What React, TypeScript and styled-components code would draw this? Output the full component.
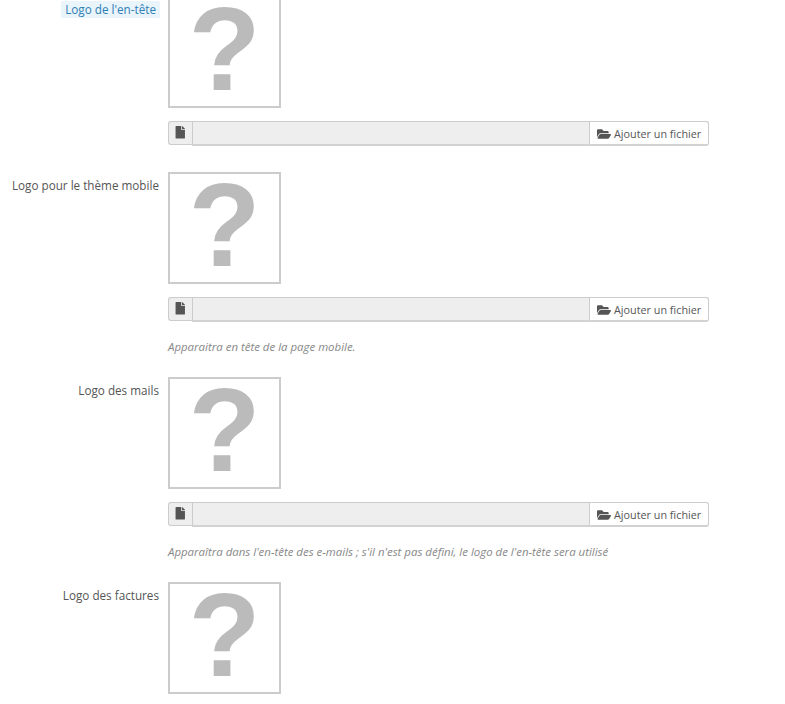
import React from "react";
import styled, { createGlobalStyle } from "styled-components";
import { FaFile, FaFolderOpen } from "react-icons/fa";

const GlobalStyle = createGlobalStyle`
  html, body {
    margin: 0;
    padding: 0;
    height: 100%;
    overflow: hidden;
    background: #fff;
  }
`;

const Page = styled.div`
  display: flex;
  flex-direction: column;
  margin-top: -4px;
  font-family: "Open Sans", sans-serif;
  font-size: 11.7px;
  color: #555;
`;

const Row = styled.div`
  display: grid;
  grid-template-columns: 160px 541px;
  column-gap: 8px;
  margin-bottom: 27px;
`;

const Label = styled.div`
  display: flex;
  justify-content: flex-end;
  align-items: flex-start;
  padding-top: 4.5px;
  line-height: 17px;
`;

const LabelText = styled.span<{ $active?: boolean }>`
  color: ${(p) => (p.$active ? "#2f80b5" : "#555")};
  background: ${(p) => (p.$active ? "#e9f4fb" : "transparent")};
  padding: ${(p) => (p.$active ? "0 4px" : "0")};
  margin-right: ${(p) => (p.$active ? "0" : "1px")};
  border-radius: 2px;
`;

const Field = styled.div`
  display: flex;
  flex-direction: column;
`;

const Thumb = styled.div`
  box-sizing: border-box;
  width: 113px;
  height: 112px;
  padding-bottom: 6px;
  border: 2px solid #ccc;
  background: #fff;
  display: flex;
  align-items: center;
  justify-content: center;
  font-family: "Liberation Sans", sans-serif;
  font-weight: 700;
  font-size: 118px;
  line-height: 100px;
  color: #bbb;
`;

const FileBar = styled.div`
  display: flex;
  align-items: flex-start;
  height: 24px;
  margin-top: 13px;
`;

const Addon = styled.div`
  box-sizing: border-box;
  width: 24px;
  height: 24px;
  display: flex;
  align-items: center;
  justify-content: center;
  background: #eee;
  border: 1px solid #ccc;
  border-right: none;
  border-radius: 3px 0 0 3px;
  color: #555;
  font-size: 12.5px;
  padding-bottom: 1px;
`;

const FileInput = styled.div`
  box-sizing: border-box;
  flex: 1;
  height: 25px;
  background: #eee;
  border: 1px solid #ccc;
  border-bottom: 2px solid #d2d2d2;
  border-right: none;
`;

const AddButton = styled.button`
  box-sizing: border-box;
  width: 120px;
  height: 25px;
  padding: 1px 0 0 7px;
  display: flex;
  align-items: center;
  gap: 3px;
  background: #fff;
  border: 1px solid #ccc;
  border-bottom: 2px solid #d2d2d2;
  border-radius: 0 3px 3px 0;
  font-family: "Open Sans", sans-serif;
  font-size: 10.8px;
  color: #555;
  white-space: nowrap;
`;

const Help = styled.p`
  margin: 18px 0 -5px;
  font-size: 11.45px;
  line-height: 16px;
  font-style: italic;
  color: #888;
`;

const logos = [
  { label: "Logo de l'en-tête", active: true },
  { label: "Logo pour le thème mobile", help: "Apparaitra en tête de la page mobile." },
  {
    label: "Logo des mails",
    help: "Apparaîtra dans l'en-tête des e-mails ; s'il n'est pas défini, le logo de l'en-tête sera utilisé",
  },
  { label: "Logo des factures", noInput: true },
];

export default function App() {
  return (
    <>
      <GlobalStyle />
      <Page>
        {logos.map((logo) => (
          <Row key={logo.label}>
            <Label>
              <LabelText $active={logo.active}>{logo.label}</LabelText>
            </Label>
            <Field>
              <Thumb>?</Thumb>
              {!logo.noInput && (
                <FileBar>
                  <Addon>
                    <FaFile />
                  </Addon>
                  <FileInput />
                  <AddButton>
                    <FaFolderOpen size={14} />
                    Ajouter un fichier
                  </AddButton>
                </FileBar>
              )}
              {logo.help && <Help>{logo.help}</Help>}
            </Field>
          </Row>
        ))}
      </Page>
    </>
  );
}
